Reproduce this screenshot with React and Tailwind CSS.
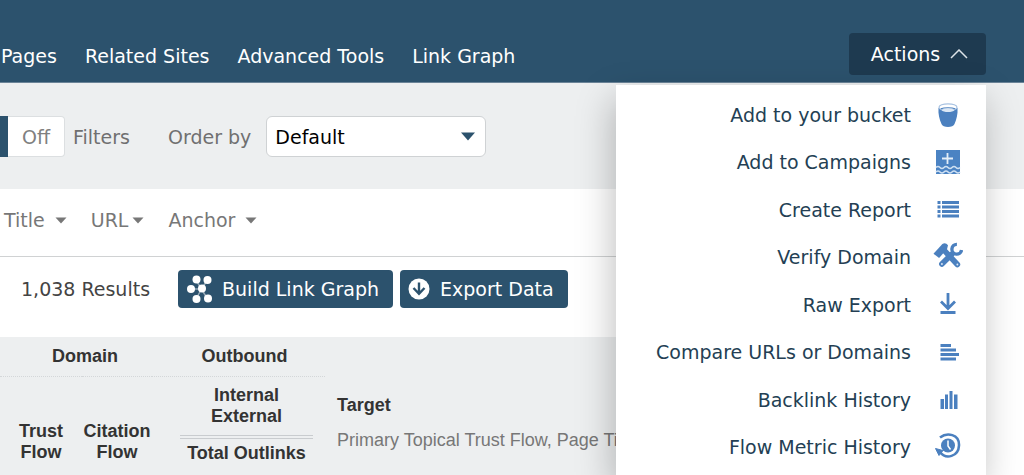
import React from "react";

const navItems = ["Pages", "Related Sites", "Advanced Tools", "Link Graph"];

function BucketIcon() {
  return (
    <svg width="30" height="30" viewBox="0 0 30 30" aria-hidden="true">
      <path d="M5.500 8h19c.5 6-1 11.500-3 16-1 4-12 4-13 0-2-4.500-3.500-10-3-16z" fill="#4b80bf" />
      <ellipse cx="15" cy="7.200" rx="9" ry="3.400" fill="#fff" stroke="#a9c3e2" strokeWidth="1.200" />
      <path d="M8.500 10c1.500-1.500 11.500-1.500 13 0-1.500 2.800-11.500 2.800-13 0z" fill="#dce8f5" />
      <path d="M8 8.800c3-1.400 11-1.400 14 0" fill="none" stroke="#4b80bf" strokeWidth="1.200" />
    </svg>
  );
}

function CampaignIcon() {
  return (
    <svg width="30" height="30" viewBox="0 0 30 30" fill="none" aria-hidden="true">
      <path d="M3 3h24v24H3z" fill="#4b83c3" />
      <path d="M14.500 6v11M9 11.500h11" stroke="#e4eef8" strokeWidth="1.800" />
      <path d="M3 20.500q2-2 4 0t4 0 4 0 4 0 4 0 4 0M3 25q2-2 4 0t4 0 4 0 4 0 4 0 4 0" stroke="#cfe0f2" strokeWidth="1.600" />
    </svg>
  );
}

function ListIcon() {
  return (
    <svg width="30" height="30" viewBox="0 0 30 30" fill="#4b80bf" aria-hidden="true">
      <path d="M4.500 6h3v3h-3zM4.500 10.500h3v3h-3zM4.500 15h3v3h-3zM4.500 19.500h3v3h-3zM9 6h17v3H9zM9 10.500h17v3H9zM9 15h17v3H9zM9 19.500h17v3H9z" />
    </svg>
  );
}

function ToolsIcon() {
  return (
    <svg width="32" height="30" viewBox="0 1 32 30" fill="none" aria-hidden="true">
      <path d="M9.500 23.500L20 13" stroke="#4b80bf" strokeWidth="6" strokeLinecap="round" />
      <path d="M30.500 8.500A5.200 5.200 0 1 1 25.500 2.500" stroke="#4b80bf" strokeWidth="3.600" />
      <path d="M12.500 9.500L26 24" stroke="#4b80bf" strokeWidth="6" strokeLinecap="round" />
      <path d="M.5 12.500L10 2Q13.500 0 16 3.500L15 7.500 6.500 17z" fill="#4b80bf" />
      <circle cx="9.500" cy="23.500" r="1" fill="#dce8f5" />
      <circle cx="26" cy="24" r="1" fill="#dce8f5" />
    </svg>
  );
}

function DownloadIcon() {
  return (
    <svg width="30" height="30" viewBox="0 0 30 30" fill="none" stroke="#4b80bf" strokeWidth="2.800" aria-hidden="true">
      <path d="M15 3v15M8 11.500l7 7 7-7M7.500 22.500h15" />
    </svg>
  );
}

function CompareIcon() {
  return (
    <svg width="30" height="30" viewBox="0 0 30 30" fill="#4b80bf" aria-hidden="true">
      <path d="M7.500 7H18v3H7.500zM7.500 11.500H23v3H7.500zM7.500 16H26v3H7.500zM7.500 20.500H23v3H7.500z" />
    </svg>
  );
}

function BarsIcon() {
  return (
    <svg width="30" height="30" viewBox="0 0 30 30" fill="#4b80bf" aria-hidden="true">
      <path d="M7.500 14H11v10H7.500zM12 9.500h3V24h-3zM16.500 6h3v18h-3zM21 9.500h3.500V24H21z" />
    </svg>
  );
}

function HistoryIcon() {
  return (
    <svg width="30" height="30" viewBox="0 1 30 30" fill="none" aria-hidden="true">
      <path d="M7 6.500C14 1 26.500 3 26 14.500C25.500 25.500 13 29 7 21" stroke="#4b80bf" strokeWidth="2.600" />
      <path d="M2.500 17.500l7.500 2-4 5z" fill="#4b80bf" stroke="#4b80bf" />
      <circle cx="15" cy="14.500" r="7" fill="#4b80bf" />
      <path d="M15 9.500v5.500l2.500 3.500" stroke="#fff" strokeWidth="1.500" />
    </svg>
  );
}

const actions = [
  { label: "Add to your bucket", Icon: BucketIcon },
  { label: "Add to Campaigns", Icon: CampaignIcon },
  { label: "Create Report", Icon: ListIcon },
  { label: "Verify Domain", Icon: ToolsIcon },
  { label: "Raw Export", Icon: DownloadIcon },
  { label: "Compare URLs or Domains", Icon: CompareIcon },
  { label: "Backlink History", Icon: BarsIcon },
  { label: "Flow Metric History", Icon: HistoryIcon },
];

function GraphIcon() {
  return (
    <svg width="28" height="30" viewBox="0 0 28 30" aria-hidden="true">
      <path d="M15.500 15L10 6M15.500 15L21 6.500M15.500 15H4.500M15.500 15L10 25M15.500 15L21.500 25" stroke="#fff" strokeOpacity=".5" strokeWidth="1.500" />
      <g fill="#fff">
        <circle cx="10.500" cy="5.500" r="4" />
        <circle cx="21.500" cy="6" r="4" />
        <circle cx="5" cy="15" r="4" />
        <circle cx="16" cy="14.500" r="4" />
        <circle cx="10.500" cy="25" r="4" />
        <circle cx="22" cy="24.500" r="4" />
      </g>
    </svg>
  );
}

function ExportIcon() {
  return (
    <svg width="22" height="22" viewBox="0 0 22 22" fill="none" aria-hidden="true">
      <circle cx="11" cy="11" r="10.500" fill="#fff" />
      <path d="M11 4.500v11M5.500 10L11 15.800l5.500-5.800" stroke="#2c526d" strokeWidth="2.400" />
    </svg>
  );
}

function SortLink({ label, gap }) {
  return (
    <a href="#sort" className={`flex items-center ${gap}`}>
      {label}
      <svg width="12" height="7" viewBox="0 0 12 7" aria-hidden="true">
        <path d="M.5.5h11L6 6.500z" fill="#777" />
      </svg>
    </a>
  );
}

function ActionsMenu() {
  return (
    <div className="relative mr-[38px]">
      <button
        type="button"
        aria-expanded="true"
        className="flex h-[42px] w-[137px] items-center justify-center gap-2.5 rounded bg-[#1e3a50] pl-1 text-white"
      >
        Actions
        <svg width="18" height="10" viewBox="0 0 18 10" fill="none" aria-hidden="true">
          <path d="M1 9l8-8 8 8" stroke="#dce3e8" strokeWidth="1.500" />
        </svg>
      </button>
      <ul className="absolute top-full right-0 z-10 mt-2.5 flex h-[390px] w-[370px] flex-col bg-white pt-1.5 pb-1 text-[#243f54] shadow-[-3px_14px_34px_rgba(0,0,0,0.25)]">
        {actions.map(({ label, Icon }) => (
          <li key={label} className="flex-1">
            <a href="#action" className="flex h-full items-center justify-end gap-[22px] pr-[23px]">
              {label}
              <span className="flex w-[30px] shrink-0 justify-center">
                <Icon />
              </span>
            </a>
          </li>
        ))}
      </ul>
    </div>
  );
}

export default function App() {
  return (
    <div className="flex h-screen flex-col overflow-hidden bg-white font-['DejaVu_Sans',Verdana,sans-serif] text-[19px] leading-6 whitespace-nowrap">
      <header className="flex items-center justify-between border-b border-[#6b8498] bg-[#2c526d] pt-[33px] pb-[7px]">
        <nav className="flex gap-7 pt-1 pl-px text-white">
          {navItems.map((item) => (
            <a key={item} href="#nav">{item}</a>
          ))}
        </nav>
        <ActionsMenu />
      </header>

      <section className="flex items-center bg-[#edeff0] pt-[33px] pb-8 text-[#707070]">
        <button type="button" role="switch" aria-checked="false" aria-labelledby="filters-label" className="flex h-[41px]">
          <span className="w-2 bg-[#2c526d]" />
          <span className="flex w-[57px] items-center justify-center rounded-r border border-l-0 border-[#dcdfe1] bg-white text-[#808080]">
            Off
          </span>
        </button>
        <span id="filters-label" className="ml-2">Filters</span>
        <label htmlFor="order" className="ml-[38px]">Order by</label>
        <div className="relative ml-[15px]">
          <select
            id="order"
            className="h-[41px] w-[220px] appearance-none rounded-md border border-[#cfd2d4] bg-white px-2 text-black"
          >
            <option>Default</option>
          </select>
          <svg className="pointer-events-none absolute top-4 right-2.5" width="16" height="9" viewBox="0 0 16 9" aria-hidden="true">
            <path d="M1 .5h14L8 8.500z" fill="#2c526d" />
          </svg>
        </div>
      </section>

      <section className="flex gap-6 border-b border-[#d0d2d3] pt-[19px] pb-6 pl-1 text-[#777]">
        <SortLink label="Title" gap="gap-2.5" />
        <SortLink label="URL" gap="gap-1" />
        <SortLink label="Anchor" gap="gap-2.5" />
      </section>

      <section className="flex items-center pt-[13px] pb-[29px] pl-[21px] text-[#444]">
        <p>1,038 Results</p>
        <div className="ml-7 flex gap-[7px] text-white">
          <button type="button" className="flex h-[38px] w-[215px] items-center gap-2 rounded bg-[#2c526d] pl-2">
            <GraphIcon />
            Build Link Graph
          </button>
          <button type="button" className="flex h-[38px] w-[168px] items-center gap-2.5 rounded bg-[#2c526d] pl-2">
            <ExportIcon />
            Export Data
          </button>
        </div>
      </section>

      <div className="mr-[76px] grow bg-[#edeff0]">
        <table className="w-full table-fixed border-collapse font-['Liberation_Sans',Arial,sans-serif] text-[18px] leading-[21px] text-[#333]">
          <colgroup>
            <col className="w-[82px]" />
            <col className="w-[70px]" />
            <col className="w-[173px]" />
            <col />
          </colgroup>
          <thead>
            <tr className="h-[39px]">
              <th colSpan={2} className="border-b border-dotted border-[#d4d7d9] pl-[18px] align-middle">Domain</th>
              <th className="border-b border-dotted border-[#d4d7d9] pl-3 align-middle">Outbound</th>
              <th rowSpan={2} className="pt-[58px] pl-3 text-left align-top">
                Target
                <p className="mt-3.5 font-normal text-[#777]">Primary Topical Trust Flow, Page Title, Target URL</p>
              </th>
            </tr>
            <tr>
              <th className="px-4 pt-11 align-top whitespace-normal">Trust Flow</th>
              <th className="pt-11 align-top whitespace-normal">Citation Flow</th>
              <th className="pt-2 pr-3 pl-7 align-top">
                <span className="block">Internal</span>
                <span className="block">External</span>
                <span className="mt-2 block border-t-4 border-double border-[#c9cccf] pt-1">Total Outlinks</span>
              </th>
            </tr>
          </thead>
        </table>
      </div>
    </div>
  );
}
